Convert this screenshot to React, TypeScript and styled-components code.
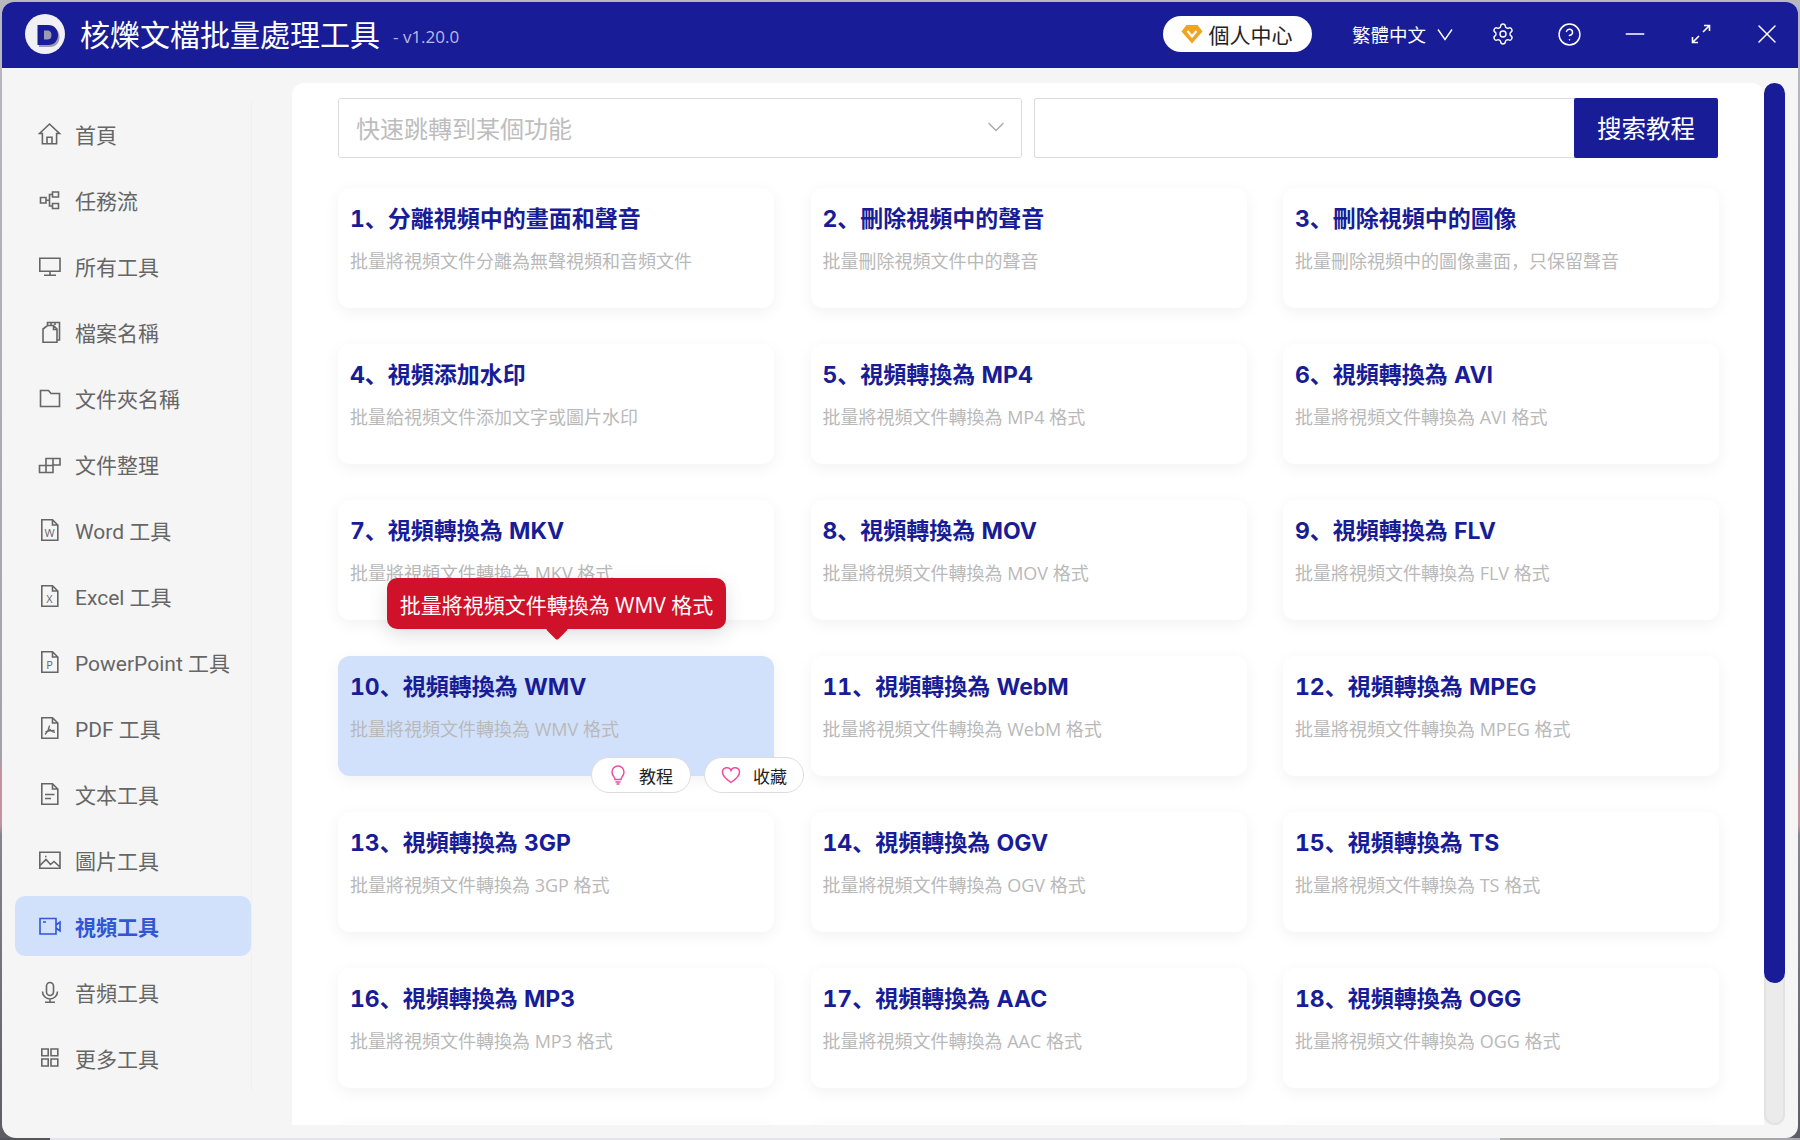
import React from "react";
import styled, { createGlobalStyle } from "styled-components";
import { ChevronDown, CircleHelp, Minus, Settings, X } from "lucide-react";

const Global = createGlobalStyle`
  html, body { margin: 0; padding: 0; overflow: hidden; }
  * { box-sizing: border-box; }
  body { font-family: "Open Sans", "Noto Sans CJK SC", sans-serif; }
`;

const Page = styled.div`
  width: 1800px;
  height: 1140px;
  padding: 2px;
  background:
    linear-gradient(to right, #55555c 0 50px, #e4e4ee 50px 1500px, #a8a8ac 1500px) left bottom / 100% 2px no-repeat,
    linear-gradient(to bottom, #b9b7bf 0, #a3a1a9 760px, #c2939f 770px, #c2939f 825px, #85858d 835px, #5c5c64 1140px);
`;

const Window = styled.div`
  width: 1796px;
  height: 1136px;
  display: flex;
  flex-direction: column;
  background: #f5f5f5;
  border-radius: 12px 12px 12px 14px;
  overflow: hidden;
`;

const Header = styled.header`
  height: 66px;
  flex: none;
  display: flex;
  align-items: center;
  padding-left: 23px;
  background: #181c96;
  color: #fff;
`;

const Logo = styled.svg`
  width: 40px;
  height: 40px;
  flex: none;
  margin-top: -3px;
`;

const AppTitle = styled.h1`
  margin: 0 0 0 15px;
  font-size: 30px;
  line-height: 40px;
  font-weight: 400;
  white-space: nowrap;
`;

const Version = styled.span`
  margin: 2px 0 0 13px;
  font-size: 17px;
  color: #b9bbe4;
  white-space: nowrap;
`;

const HeaderRight = styled.div`
  margin-left: auto;
  padding-bottom: 2px;
  display: flex;
  align-items: center;
`;

const ProfilePill = styled.button`
  width: 149px;
  height: 36px;
  display: flex;
  align-items: center;
  justify-content: center;
  gap: 6px;
  margin-right: 40px;
  padding: 0 2px 0 0;
  border: 0;
  border-radius: 18px;
  background: #fff;
  color: #222;
  font: inherit;
  font-size: 21px;
`;

const Lang = styled.div`
  width: 116px;
  display: flex;
  align-items: center;
  gap: 10px;
  font-size: 18.5px;
  white-space: nowrap;
`;

const IconButton = styled.div`
  width: 62px;
  margin-left: 4px;
  display: flex;
  justify-content: center;
  align-items: center;
  color: #fff;
`;

const Main = styled.div`
  flex: 1;
  min-height: 0;
  display: flex;
`;

const Sidebar = styled.aside`
  width: 290px;
  flex: none;
  padding: 32px 0 0 13px;
`;

const Nav = styled.nav`
  width: 236px;
  height: 990px;
  padding-top: 4px;
  display: flex;
  flex-direction: column;
  gap: 6px;
  box-shadow: 1px 0 0 #f0f0f0;
`;

const NavItem = styled.div<{ $active?: boolean }>`
  height: 60px;
  flex: none;
  display: flex;
  align-items: center;
  gap: 13px;
  padding-left: 23px;
  border-radius: 10px;
  font-family: "Roboto", "Noto Sans CJK SC", sans-serif;
  font-size: 21px;
  white-space: nowrap;
  color: ${(p) => (p.$active ? "#3056d3" : "#666")};
  font-weight: ${(p) => (p.$active ? 700 : 400)};
  background: ${(p) => (p.$active ? "#d1e1fb" : "transparent")};
  svg { flex: none; }
`;

const ContentWrap = styled.div`
  flex: 1;
  min-width: 0;
  display: flex;
  padding: 15px 13px 13px 0;
`;

const Panel = styled.main`
  flex: 1;
  min-width: 0;
  padding: 15px 46px 0 46px;
  background: #fff;
  border-radius: 12px 12px 0 0;
  overflow: hidden;
`;

const ScrollTrack = styled.div`
  width: 21px;
  flex: none;
  background: #ebebeb;
  border-radius: 11px;
  box-shadow: inset 0 0 0 2px #e2e2e2;
`;

const ScrollThumb = styled.div`
  height: 900px;
  background: #181c96;
  border-radius: 11px;
`;

const SearchRow = styled.div`
  display: flex;
  height: 60px;
  gap: 12px;
`;

const Select = styled.div`
  width: 684px;
  display: flex;
  align-items: center;
  justify-content: space-between;
  padding: 0 11px 2px 17px;
  border: 1px solid #dcdcdc;
  border-radius: 3px;
  font-size: 24px;
  color: #bdbdbd;
  svg { color: #a8a8a8; }
`;

const SearchBox = styled.div`
  flex: 1;
  display: flex;
  border: 1px solid #dcdcdc;
  border-right: 0;
  border-radius: 3px;
`;

const SearchSpacer = styled.div`
  flex: 1;
`;

const SearchButton = styled.button`
  width: 144px;
  height: 60px;
  margin: -1px 0;
  padding: 0 0 2px;
  border: 0;
  border-radius: 2px;
  background: #181c96;
  color: #fff;
  font: inherit;
  font-size: 24.5px;
`;

const Grid = styled.div`
  margin: 30px -1px 0 0;
  display: grid;
  grid-template-columns: repeat(3, 1fr);
  column-gap: 36.5px;
  row-gap: 36px;
`;

const Card = styled.article<{ $hover?: boolean }>`
  position: relative;
  height: 120px;
  padding: 16px 12px 0;
  border-radius: 12px;
  background: ${(p) => (p.$hover ? "#d1e1fb" : "#fff")};
  box-shadow: 0 4px 16px rgba(0, 0, 0, 0.055);
`;

const CardTitle = styled.h3`
  margin: 0;
  height: 30px;
  font-family: "Inter", "Noto Sans CJK SC", sans-serif;
  font-variant-numeric: tabular-nums;
  font-size: 23px;
  line-height: 30px;
  font-weight: 700;
  color: #181c96;
  white-space: nowrap;
`;

const CardDesc = styled.p`
  margin: 15px 0 0;
  font-size: 18px;
  line-height: 24px;
  color: #b9b9b9;
  white-space: nowrap;
`;

const Tooltip = styled.div`
  position: absolute;
  z-index: 5;
  left: 49px;
  top: -78px;
  width: 339px;
  height: 51px;
  display: flex;
  align-items: center;
  justify-content: center;
  border-radius: 10px;
  background: #cf1129;
  color: #fff;
  font-size: 21px;
  white-space: nowrap;
  box-shadow: 0 6px 20px rgba(0, 0, 0, 0.12);
  &::after {
    content: "";
    position: absolute;
    left: 162px;
    bottom: -8px;
    width: 16px;
    height: 16px;
    background: #cf1129;
    transform: rotate(45deg);
    border-radius: 2px;
  }
`;

const CardActions = styled.div`
  position: absolute;
  z-index: 4;
  right: -30px;
  top: 101px;
  display: flex;
  gap: 13px;
`;

const ActionButton = styled.div`
  width: 100px;
  height: 36px;
  display: flex;
  align-items: center;
  justify-content: center;
  gap: 12px;
  border: 1px solid #dddddd;
  border-radius: 18px;
  background: #fff;
  color: #222;
  font-size: 17px;
  white-space: nowrap;
  svg { color: #f04ba0; flex: none; }
`;

type IconProps = { children: React.ReactNode };
const Ico = ({ children }: IconProps) => (
  <svg width="24" height="24" viewBox="0 0 24 24" fill="none" stroke="currentColor" strokeWidth="1.6">
    {children}
  </svg>
);

const FileShape = () => <path d="M3.8 1.8H14.5L19.8 7V22.2H3.8ZM14.5 1.8V7H19.8" />;

const Letter = ({ c }: { c: string }) => (
  <text x="11.5" y="18.5" textAnchor="middle" fontSize="11" fill="currentColor" stroke="none" fontFamily="Open Sans, sans-serif">
    {c}
  </text>
);

const icons: Record<string, React.ReactNode> = {
  home: <path d="M1.5 11.5 11.5 2l10 9.5H18.6V21.8H4.4V11.5ZM9 21.8V15.2H14V21.8" />,
  flow: <path d="M2.5 9.5H8V15H2.5ZM14.5 4H20.5V9H14.5ZM14.5 15.5H20.5V20.5H14.5ZM8 12.2H11.5M14.5 6.5H11.5V18H14.5" />,
  monitor: <path d="M1.8 4.2H22V17.2H1.8ZM12 17.2V21M6 21.2H18" />,
  files: <path d="M5 9 9.5 5.5H15.5L19 9V22.3H5ZM15.5 5.5V9.5H19M9.5 5.5V2.5H21.5V20H19M13 2.5V5M17 2.5V5" />,
  folder: <path d="M2.5 4.5H10.5L13 7.5H21.5V20.5H2.5Z" />,
  puzzle: <path d="M1.5 13.5H8V20.5H1.5ZM8 13.5H15V20.5H8ZM8 13.5V6.5H15V13.5ZM15 6.5H22V13H15" />,
  word: <><FileShape /><Letter c="W" /></>,
  excel: <><FileShape /><Letter c="X" /></>,
  ppt: <><FileShape /><Letter c="P" /></>,
  pdf: <><FileShape /><path strokeWidth="1.3" d="M11.5 9.5C11 13 9.5 16 7 18.5M11.5 13C12.5 15 14.5 16 17 16.3M7.5 15.8C10 14.8 13.5 14.5 16.5 14.5" /></>,
  text: <><FileShape /><path d="M7 12.5H16.5M7 16.5H13" /></>,
  image: <path d="M1.8 4.2H22V20.2H1.8ZM2 17.5 8 11.5 12.5 16.5 16 13.5 22 19M7 8.5H8.5" />,
  video: <path d="M2 4.5H18V20H2ZM18 11 22 8V17L18 14M5 8H8" />,
  mic: <path d="M8.5 6a3.5 3.5 0 0 1 7 0V12a3.5 3.5 0 0 1-7 0ZM4.5 11.5a7.5 7.5 0 0 0 15 0M12 19V22.2M7 22.3H17" />,
  grid: <path d="M3.8 3H10.2V9.8H3.8ZM13 3H19.8V9.8H13ZM3.8 13H10.2V20H3.8ZM13 13H19.8V20H13Z" />,
};

const navItems: { key: string; label: string; active?: boolean }[] = [
  { key: "home", label: "首頁" },
  { key: "flow", label: "任務流" },
  { key: "monitor", label: "所有工具" },
  { key: "files", label: "檔案名稱" },
  { key: "folder", label: "文件夾名稱" },
  { key: "puzzle", label: "文件整理" },
  { key: "word", label: "Word 工具" },
  { key: "excel", label: "Excel 工具" },
  { key: "ppt", label: "PowerPoint 工具" },
  { key: "pdf", label: "PDF 工具" },
  { key: "text", label: "文本工具" },
  { key: "image", label: "圖片工具" },
  { key: "video", label: "視頻工具", active: true },
  { key: "mic", label: "音頻工具" },
  { key: "grid", label: "更多工具" },
];

const fmt = (n: string) => `批量將視頻文件轉換為 ${n} 格式`;

const cards: { title: string; desc: string }[] = [
  { title: "1、分離視頻中的畫面和聲音", desc: "批量將視頻文件分離為無聲視頻和音頻文件" },
  { title: "2、刪除視頻中的聲音", desc: "批量刪除視頻文件中的聲音" },
  { title: "3、刪除視頻中的圖像", desc: "批量刪除視頻中的圖像畫面，只保留聲音" },
  { title: "4、視頻添加水印", desc: "批量給視頻文件添加文字或圖片水印" },
  ...["MP4", "AVI", "MKV", "MOV", "FLV", "WMV", "WebM", "MPEG", "3GP", "OGV", "TS", "MP3", "AAC", "OGG"].map((n, i) => ({
    title: `${i + 5}、視頻轉換為 ${n}`,
    desc: fmt(n),
  })),
  { title: "", desc: "" },
  { title: "", desc: "" },
  { title: "", desc: "" },
];

export default function App() {
  return (
    <Page>
      <Global />
      <Window>
        <Header>
          <Logo viewBox="0 0 40 40">
            <circle cx="20" cy="20" r="20" fill="#f1f1f5" />
            <path fill="#9a9ab0" d="M14 13H24.5C31.5 13 34.5 18 34.5 23S31.5 33 24.5 33H14Z" />
            <path
              fill="#181c96"
              fillRule="evenodd"
              d="M12.5 11H23C30 11 33 16 33 21S30 31 23 31H12.5ZM19 16.5V25.5H22.5C25 25.5 26.5 24 26.5 21S25 16.5 22.5 16.5Z"
            />
          </Logo>
          <AppTitle>核爍文檔批量處理工具</AppTitle>
          <Version>- v1.20.0</Version>
          <HeaderRight>
            <ProfilePill>
              <svg width="22" height="20" viewBox="0 0 22 20">
                <path fill="#f0a41f" d="M5.5 1H16.5L21.5 7.5 11 19.5 0.5 7.5Z" />
                <path fill="none" stroke="#fff" strokeWidth="2.2" d="M6.5 7 11 12.5 15.5 7" />
              </svg>
              個人中心
            </ProfilePill>
            <Lang>
              繁體中文
              <svg width="18" height="18" viewBox="0 0 18 18" fill="none" stroke="#fff" strokeWidth="1.4">
                <path d="M2 4.5 9 14.5 16 4.5" />
              </svg>
            </Lang>
            <IconButton>
              <Settings size={24} strokeWidth={1.4} />
            </IconButton>
            <IconButton>
              <CircleHelp size={25} strokeWidth={1.4} />
            </IconButton>
            <IconButton>
              <Minus size={30} strokeWidth={1.2} />
            </IconButton>
            <IconButton>
              <svg width="20" height="20" viewBox="0 0 20 20" fill="none" stroke="#fff" strokeWidth="1.6">
                <path d="M12 8 18 2M13 1.5H18.5V7M8 12 2 18M1.5 13V18.5H7" />
              </svg>
            </IconButton>
            <IconButton>
              <X size={32} strokeWidth={1.1} />
            </IconButton>
          </HeaderRight>
        </Header>
        <Main>
          <Sidebar>
            <Nav>
              {navItems.map((it) => (
                <NavItem key={it.key} $active={it.active}>
                  <Ico>{icons[it.key]}</Ico>
                  {it.label}
                </NavItem>
              ))}
            </Nav>
          </Sidebar>
          <ContentWrap>
            <Panel>
              <SearchRow>
                <Select>
                  快速跳轉到某個功能
                  <ChevronDown size={28} strokeWidth={1.1} />
                </Select>
                <SearchBox>
                  <SearchSpacer />
                  <SearchButton>搜索教程</SearchButton>
                </SearchBox>
              </SearchRow>
              <Grid>
                {cards.map((c, i) => (
                  <Card key={i} $hover={i === 9}>
                    <CardTitle>{c.title}</CardTitle>
                    <CardDesc>{c.desc}</CardDesc>
                    {i === 9 && (
                      <>
                        <Tooltip>{c.desc}</Tooltip>
                        <CardActions>
                          <ActionButton>
                            <svg width="18" height="20" viewBox="0 0 18 20" fill="none" stroke="currentColor" strokeWidth="1.5">
                              <path d="M6 14.5C6 12 3 11 3 7A6 6 0 0 1 15 7C15 11 12 12 12 14.5ZM6.5 17H11.5M7.5 19H10.5" />
                            </svg>
                            教程
                          </ActionButton>
                          <ActionButton>
                            <svg width="20" height="18" viewBox="0 0 20 18" fill="none" stroke="currentColor" strokeWidth="1.5">
                              <path d="M10 16.5C5 13 1.5 10 1.5 6.2A4.4 4.4 0 0 1 10 4.5 4.4 4.4 0 0 1 18.5 6.2C18.5 10 15 13 10 16.5Z" />
                            </svg>
                            收藏
                          </ActionButton>
                        </CardActions>
                      </>
                    )}
                  </Card>
                ))}
              </Grid>
            </Panel>
            <ScrollTrack>
              <ScrollThumb />
            </ScrollTrack>
          </ContentWrap>
        </Main>
      </Window>
    </Page>
  );
}
